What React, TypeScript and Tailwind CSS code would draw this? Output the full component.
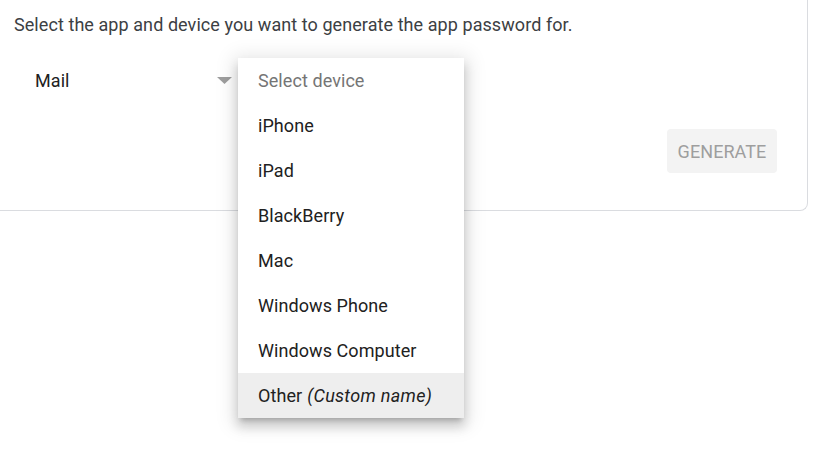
const devices = ["iPhone", "iPad", "BlackBerry", "Mac", "Windows Phone", "Windows Computer"];

function DeviceMenu() {
    return (
        <div className="absolute left-[238px] top-[58px] w-[226px] bg-white shadow-[0_8px_10px_1px_rgba(0,0,0,0.14),0_3px_18px_5px_rgba(0,0,0,0.1),0_5px_5px_-3px_rgba(0,0,0,0.2)]">
            <div className="h-[45px] px-5 flex items-center text-[#757575]">Select device</div>
            {devices.map((d) => (
                <div key={d} className="h-[45px] px-5 flex items-center text-[#212121] cursor-pointer">
                    {d}
                </div>
            ))}
            <div className="h-[45px] px-5 flex items-center gap-[5px] text-[#212121] bg-[#eeeeee] cursor-pointer">
                Other <span className="italic tracking-[0.3px]">(Custom name)</span>
            </div>
        </div>
    );
}

export default function App() {
    return (
        <div className="relative w-[837px] h-[449px] bg-white overflow-hidden text-[18px] tracking-[0.07px]" style={{ fontFamily: "Roboto, 'Noto Sans', sans-serif" }}>
            <div className="w-[808px] h-[211px] border-r border-b border-[#dadce0] rounded-br-[8px] flex flex-col">
                <p className="pl-[14px] pt-[13px] leading-6 text-[#3c4043]">
                    Select the app and device you want to generate the app password for.
                </p>
                <div className="flex items-center mt-[31px] h-[24px]">
                    <div className="ml-[35px] w-[198px] flex items-center justify-between text-[#212121]">
                        <span>Mail</span>
                        <svg width="15" height="7" viewBox="0 0 15 7" className="mr-[1px]">
                            <polygon points="0,0 15,0 7.5,7" fill="#9e9e9e" />
                        </svg>
                    </div>
                </div>
                <div className="flex justify-end pr-[30px] mt-[37px]">
                    <button className="h-[44px] w-[110px] rounded-[4px] bg-[#f3f3f3] text-[#9e9e9e] uppercase">
                        Generate
                    </button>
                </div>
            </div>
            <DeviceMenu />
        </div>
    );
}
